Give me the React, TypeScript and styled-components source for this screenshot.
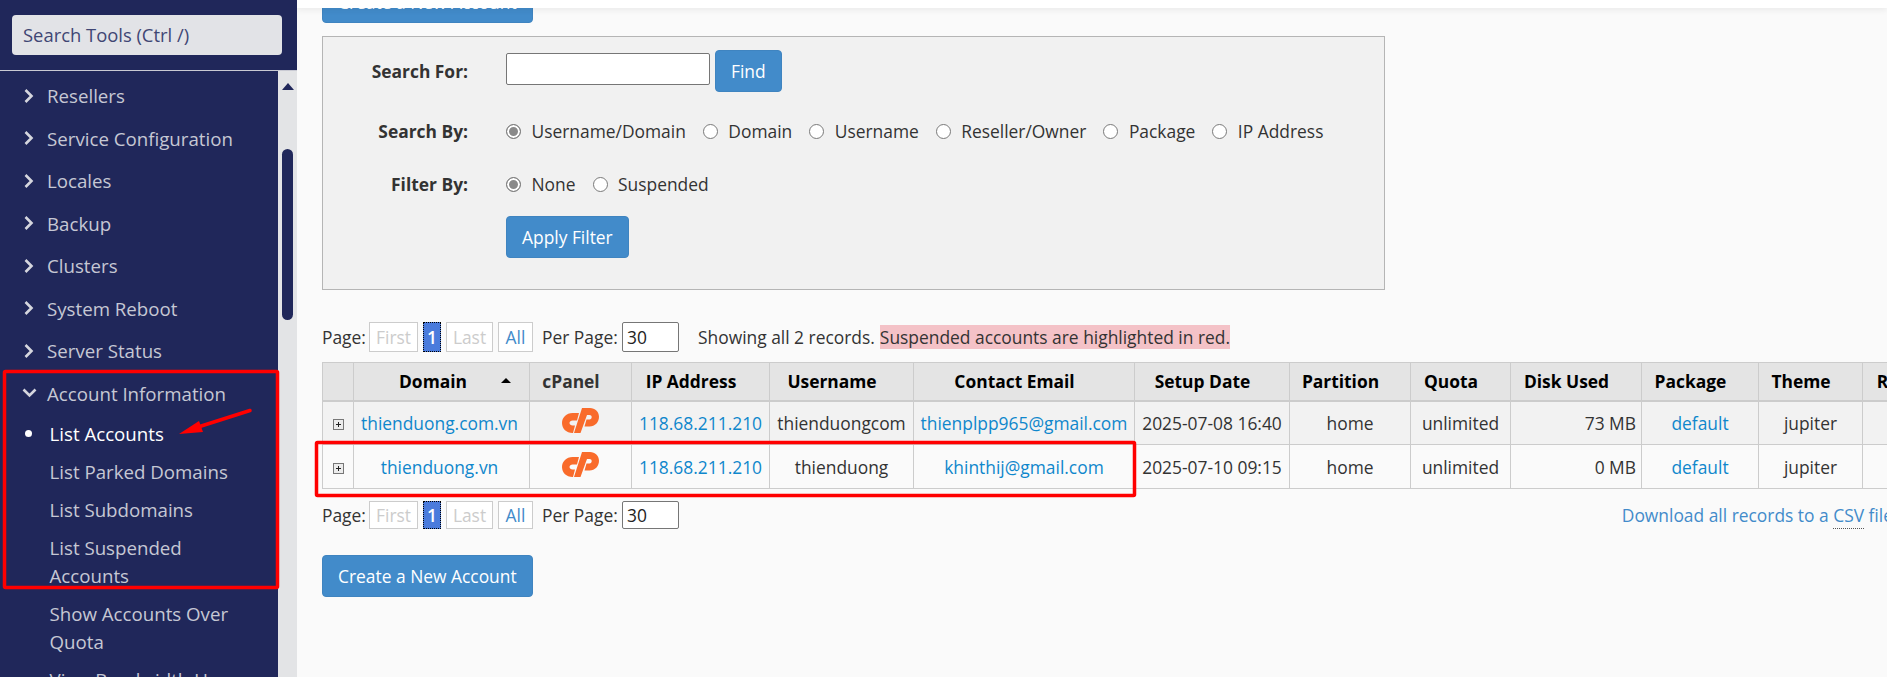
import React from 'react'
import styled, { createGlobalStyle } from 'styled-components'

const GlobalStyle = createGlobalStyle`
  html, body { margin: 0; padding: 0; height: 100%; overflow: hidden; }
  body { font-family: "Open Sans", "Liberation Sans", sans-serif; font-size: 17.4px; color: #333; background: #fafafa; }
  * { box-sizing: border-box; }
`

const NAVY = '#20275a'
const LINK = '#0f87cc'

const Shell = styled.div`
  display: flex;
  width: 1887px;
  height: 677px;
  position: relative;
  overflow: hidden;
`

const Sidebar = styled.aside`
  width: 297px;
  flex: none;
  display: flex;
  flex-direction: column;
  background: ${NAVY};
  font-size: 18.4px;
`

const SearchBlock = styled.div`
  height: 71px;
  padding: 15px 15px 0 12px;
  border-bottom: 1px solid #c9cad3;
`

const SearchBox = styled.div`
  height: 40px;
  padding-left: 11px;
  line-height: 40px;
  color: #3f4674;
  background: #e2e3e7;
  border-radius: 4px;
`

const SideBody = styled.div`
  flex: 1;
  display: flex;
  min-height: 0;
`

const NavList = styled.ul`
  flex: 1;
  list-style: none;
  margin: 0;
  padding: 3.5px 0 0;
  overflow: hidden;
  color: #c6c8d4;
  font-size: 18.7px;
  font-weight: 500;
`

const NavItem = styled.li`
  display: flex;
  align-items: center;
  height: 42.5px;
  padding-left: 24px;
  gap: 13px;
`

const SubList = styled.ul`
  list-style: none;
  margin: 0.5px 0 0;
  padding: 0 0 0 49.5px;
  color: #c6c8d4;
`

const SubItem = styled.li<{ $active?: boolean }>`
  position: relative;
  padding: 5px 20px 5px 0;
  line-height: 28px;
  color: ${p => (p.$active ? '#fff' : 'inherit')};

  &::before {
    content: '';
    display: ${p => (p.$active ? 'block' : 'none')};
    position: absolute;
    left: -24.5px;
    top: 15px;
    width: 7px;
    height: 7px;
    border-radius: 50%;
    background: #fff;
  }
`

const ScrollTrack = styled.div`
  width: 19px;
  flex: none;
  display: flex;
  flex-direction: column;
  align-items: center;
  padding-top: 12px;
  background: #e3e4e6;
`

const ScrollArrow = styled.div`
  width: 0;
  height: 0;
  border-left: 6.5px solid transparent;
  border-right: 6.5px solid transparent;
  border-bottom: 7px solid ${NAVY};
`

const ScrollThumb = styled.div`
  width: 11px;
  height: 171px;
  margin-top: 59px;
  border-radius: 6px;
  background: ${NAVY};
`

const Main = styled.main`
  flex: 1;
  min-width: 0;
  position: relative;
  overflow: hidden;
  background: #fafafa;
`

const TopBar = styled.div`
  position: absolute;
  top: 0;
  left: 0;
  right: 0;
  height: 8px;
  background: #fff;
  box-shadow: 0 2px 6px rgba(0, 0, 0, 0.07);
`

const Content = styled.div`
  margin-top: -19px;
  padding-left: 25px;
  width: 1596px;
`

const Button = styled.button<{ $top?: number }>`
  display: block;
  height: 42px;
  margin-top: ${p => p.$top ?? 0}px;
  padding: 0 15px;
  font: inherit;
  color: #fff;
  background: #428bca;
  border: 1px solid #3f84c0;
  border-radius: 4px;
  white-space: nowrap;
`

const FilterBox = styled.div`
  width: 1063px;
  height: 254px;
  margin-top: 13px;
  padding-top: 13px;
  background: #f1f1f1;
  border: 1px solid #b5b5b5;
`

const FormRow = styled.div<{ $top?: number; $height: number }>`
  display: grid;
  grid-template-columns: 145px 1fr;
  column-gap: 38px;
  align-items: center;
  height: ${p => p.$height}px;
  margin-top: ${p => p.$top ?? 0}px;
`

const FormLabel = styled.label`
  font-weight: 700;
  text-align: right;
  color: #333;
`

const FindGroup = styled.div`
  display: flex;
  gap: 5px;
  align-items: flex-start;
`

const TextInput = styled.div`
  width: 204px;
  height: 32px;
  margin-top: 3px;
  background: #fff;
  border: 1px solid #767676;
  border-radius: 2px;
`

const RadioGroup = styled.div`
  display: flex;
  align-items: center;
  gap: 17px;
`

const RadioOption = styled.span`
  display: flex;
  align-items: center;
  gap: 10.5px;
  white-space: nowrap;
`

const Radio = styled.span<{ $checked?: boolean }>`
  width: 15px;
  height: 15px;
  flex: none;
  border-radius: 50%;
  border: 1px solid #7a7a7a;
  background: ${p => (p.$checked ? '#8a8a8a' : '#fff')};
  box-shadow: ${p => (p.$checked ? 'inset 0 0 0 2px #fff' : 'none')};
`

const Pager = styled.div<{ $top: number; $height: number }>`
  display: flex;
  align-items: center;
  height: ${p => p.$height}px;
  margin-top: ${p => p.$top}px;
  white-space: nowrap;
`

const PageLabel = styled.span`
  width: 47px;
`

const PageBtn = styled.span<{ $kind?: 'off' | 'link'; $width: number }>`
  display: flex;
  align-items: center;
  justify-content: center;
  width: ${p => p.$width}px;
  height: 100%;
  margin-right: 5px;
  border: 1px solid #ccc;
  background: #fff;
  color: ${p => (p.$kind === 'link' ? '#428bca' : '#ccc')};
`

const PageCurrent = styled.span`
  display: flex;
  align-items: center;
  justify-content: center;
  width: 18px;
  height: 100%;
  margin-right: 5px;
  color: #fff;
  font-weight: 600;
  background: #4a7bdc;
  border: 1px dotted #000;
`

const PerPage = styled.span`
  margin-left: 4px;
  width: 80px;
`

const PerInput = styled.div`
  display: flex;
  align-items: center;
  width: 57px;
  height: 100%;
  padding-left: 4px;
  background: #fff;
  border: 1px solid #767676;
  border-radius: 2px;
  color: #222;
`

const Records = styled.span`
  margin-left: 19px;
`

const Highlight = styled.span`
  margin-left: 5px;
  padding: 0;
  background: #f4c2c7;
`

const Download = styled.a`
  margin-left: auto;
  color: #428bca;
`

const Dotted = styled.span`
  border-bottom: 1px dotted #555;
  padding-bottom: 1px;
`

const Table = styled.table`
  width: 1657px;
  margin-top: 10px;
  table-layout: fixed;
  border-collapse: collapse;
`

const Th = styled.th<{ $soft?: boolean; $sort?: boolean }>`
  height: 38px;
  padding: 0 ${p => (p.$sort ? 0 : 19)}px 1px 0;
  background: #e4e4e4;
  border: 1px solid #ccc;
  border-bottom-width: 2px;
  color: ${p => (p.$soft ? '#333' : '#000')};
  font-weight: 700;
  text-align: center;
  white-space: nowrap;
  overflow: hidden;
`

const SortHead = styled.div`
  display: flex;
  align-items: center;
  justify-content: space-between;
  padding: 0 18px 0 45px;
`

const SortArrow = styled.span`
  width: 0;
  height: 0;
  border-left: 5px solid transparent;
  border-right: 5px solid transparent;
  border-bottom: 5px solid #000;
`

const Row = styled.tr<{ $alt?: boolean }>`
  background: ${p => (p.$alt ? '#f2f2f2' : '#fafafa')};
`

const Td = styled.td<{ $align?: string; $padRight?: number }>`
  height: 44px;
  padding: 0 ${p => p.$padRight ?? 5}px 0 5px;
  border: 1px solid #ccc;
  text-align: ${p => p.$align ?? 'center'};
  white-space: nowrap;
  overflow: hidden;
`

const CellLink = styled.a`
  color: ${LINK};
`

const Annotation = styled.svg`
  position: absolute;
  left: 0;
  top: 0;
  pointer-events: none;
`

const Chevron = ({ down }: { down?: boolean }) => (
  <svg width="10" height="14" viewBox="0 0 10 14" style={{ flex: 'none', overflow: 'visible' }}>
    <path
      d={down ? 'M-0.5 3.5 L5.5 9.5 L11.5 3.5' : 'M1.5 1 L7.5 7 L1.5 13'}
      fill="none"
      stroke="#d5d6de"
      strokeWidth="2.6"
    />
  </svg>
)

const CpanelLogo = () => (
  <svg width="37" height="25" viewBox="0 0 37 25" style={{ display: 'block', margin: '-5px auto 0' }}>
    <path
      fill="#f96b2b"
      d="M17 5H10.5C4.5 5 0 9.5 0 15C0 20.8 4.5 25 10.5 25H11L13 17.5H10.5C9 17.5 7.5 16.5 7.5 15C7.5 13.5 9 12.5 10.5 12.5H15Z"
    />
    <path
      fill="#f96b2b"
      d="M20 0H28C33 0 37 3.7 37 8.7C37 14 33 18.5 27.5 18.5H22.5L24.5 11.5H27.5C28.8 11.5 29.7 10.3 29.7 9C29.7 7.8 28.8 7 27.5 7H25L18.5 25H12Z"
    />
  </svg>
)

const ExpandIcon = () => (
  <svg width="11" height="11" viewBox="0 0 11 11" style={{ display: 'block', margin: '4px auto 0' }}>
    <rect x="0.5" y="0.5" width="10" height="10" fill="#ececec" stroke="#777" />
    <path d="M3 5.5H8M5.5 3V8" stroke="#222" />
  </svg>
)

const navItems = ['Resellers', 'Service Configuration', 'Locales', 'Backup', 'Clusters', 'System Reboot', 'Server Status']
const subItems = ['List Accounts', 'List Parked Domains', 'List Subdomains', 'List Suspended Accounts', 'Show Accounts Over Quota', 'View Bandwidth Usage']

const searchBy: [string, boolean?][] = [
  ['Username/Domain', true],
  ['Domain'],
  ['Username'],
  ['Reseller/Owner'],
  ['Package'],
  ['IP Address'],
]

const colWidths = [31, 176, 102, 138, 144, 221, 155, 121, 100, 131, 117, 104, 117]
const headers = ['IP Address', 'Username', 'Contact Email', 'Setup Date', 'Partition', 'Quota', 'Disk Used', 'Package', 'Theme', 'Reseller']

const accounts = [
  { domain: 'thienduong.com.vn', user: 'thienduongcom', email: 'thienplpp965@gmail.com', date: '2025-07-08 16:40', disk: '73 MB' },
  { domain: 'thienduong.vn', user: 'thienduong', email: 'khinthij@gmail.com', date: '2025-07-10 09:15', disk: '0 MB' },
]

const PagerLinks = () => (
  <>
    <PageLabel>Page:</PageLabel>
    <PageBtn $kind="off" $width={49}>First</PageBtn>
    <PageCurrent>1</PageCurrent>
    <PageBtn $kind="off" $width={47}>Last</PageBtn>
    <PageBtn $kind="link" $width={35}>All</PageBtn>
    <PerPage>Per Page:</PerPage>
    <PerInput>30</PerInput>
  </>
)

const App: React.FC = () => {
  return (
    <Shell>
      <GlobalStyle />
      <Sidebar>
        <SearchBlock>
          <SearchBox>Search Tools (Ctrl /)</SearchBox>
        </SearchBlock>
        <SideBody>
          <NavList>
            {navItems.map(name => (
              <NavItem key={name}>
                <Chevron />
                {name}
              </NavItem>
            ))}
            <NavItem>
              <Chevron down />
              Account Information
            </NavItem>
            <SubList>
              {subItems.map((name, i) => (
                <SubItem key={name} $active={i === 0}>{name}</SubItem>
              ))}
            </SubList>
          </NavList>
          <ScrollTrack>
            <ScrollArrow />
            <ScrollThumb />
          </ScrollTrack>
        </SideBody>
      </Sidebar>

      <Main>
        <Content>
          <Button>Create a New Account</Button>
          <FilterBox>
            <FormRow $height={42}>
              <FormLabel>Search For:</FormLabel>
              <FindGroup>
                <TextInput />
                <Button>Find</Button>
              </FindGroup>
            </FormRow>
            <FormRow $top={27} $height={24}>
              <FormLabel>Search By:</FormLabel>
              <RadioGroup>
                {searchBy.map(([name, checked]) => (
                  <RadioOption key={name}>
                    <Radio $checked={checked} />
                    {name}
                  </RadioOption>
                ))}
              </RadioGroup>
            </FormRow>
            <FormRow $top={29} $height={24}>
              <FormLabel>Filter By:</FormLabel>
              <RadioGroup>
                <RadioOption>
                  <Radio $checked />
                  None
                </RadioOption>
                <RadioOption>
                  <Radio />
                  Suspended
                </RadioOption>
              </RadioGroup>
            </FormRow>
            <FormRow $top={20} $height={42}>
              <span />
              <div>
                <Button>Apply Filter</Button>
              </div>
            </FormRow>
          </FilterBox>

          <Pager $top={32} $height={30}>
            <PagerLinks />
            <Records>Showing all 2 records.</Records>
            <Highlight>Suspended accounts are highlighted in red.</Highlight>
          </Pager>

          <Table>
            <colgroup>
              {colWidths.map((w, i) => (
                <col key={i} style={{ width: w }} />
              ))}
            </colgroup>
            <thead>
              <tr>
                <Th $sort />
                <Th $sort>
                  <SortHead>
                    Domain
                    <SortArrow />
                  </SortHead>
                </Th>
                <Th $soft>cPanel</Th>
                {headers.map(h => (
                  <Th key={h}>{h}</Th>
                ))}
              </tr>
            </thead>
            <tbody>
              {accounts.map((a, i) => (
                <Row key={a.domain} $alt={i === 0}>
                  <Td><ExpandIcon /></Td>
                  <Td $padRight={9}><CellLink>{a.domain}</CellLink></Td>
                  <Td><CpanelLogo /></Td>
                  <Td><CellLink>118.68.211.210</CellLink></Td>
                  <Td>{a.user}</Td>
                  <Td><CellLink>{a.email}</CellLink></Td>
                  <Td>{a.date}</Td>
                  <Td>home</Td>
                  <Td>unlimited</Td>
                  <Td $align="right">{a.disk}</Td>
                  <Td><CellLink>default</CellLink></Td>
                  <Td>jupiter</Td>
                  <Td />
                </Row>
              ))}
            </tbody>
          </Table>

          <Pager $top={12} $height={28}>
            <PagerLinks />
            <Download>
              Download all records to a <Dotted>CSV</Dotted> file
            </Download>
          </Pager>

          <Button $top={26}>Create a New Account</Button>
        </Content>
        <TopBar />
      </Main>

      <Annotation width="1887" height="677" viewBox="0 0 1887 677">
        <rect x="4.5" y="371.5" width="273" height="216" fill="none" stroke="#f00" strokeWidth="3.5" rx="1" />
        <rect x="316.5" y="442.5" width="818" height="53" fill="none" stroke="#f00" strokeWidth="3.5" rx="1" />
        <path d="M250 410.5L195 428" stroke="#f00" strokeWidth="3.5" strokeLinecap="round" />
        <path d="M179 434L199 421L203 432Z" fill="#f00" />
      </Annotation>
    </Shell>
  )
}

export default App
